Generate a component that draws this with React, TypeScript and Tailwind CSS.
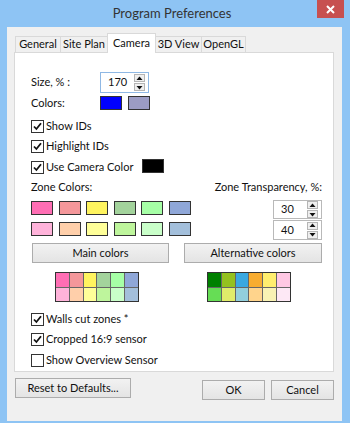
const zone1 = ["#ff6eb4", "#f4979a", "#fff45f", "#a3d39c", "#a6ffa6", "#8fa7d8"];
const zone2 = ["#ffb3da", "#ffcfaa", "#ffff99", "#bef59c", "#c9ffc9", "#a3bfdb"];
const alt1 = ["#008000", "#94c11f", "#3aa8e0", "#f7ac30", "#ffee6e", "#ffc8e3"];
const alt2 = ["#66dd55", "#e0ec6a", "#92cfdc", "#ffd48c", "#f8f2b4", "#fde8f5"];

function Spinner() {
  return (
    <div className="flex flex-col gap-[1px] mr-[3px]">
      <div className="w-[11px] h-[8px] border border-[#b5b5b5] bg-[#efefef] flex items-center justify-center">
        <svg width="7" height="5" viewBox="0 0 7 5">
          <path d="M3.5 0.5 L6.5 4 L0.5 4 Z" fill="#111" />
        </svg>
      </div>
      <div className="w-[11px] h-[8px] border border-[#b5b5b5] bg-[#efefef] flex items-center justify-center">
        <svg width="7" height="5" viewBox="0 0 7 5">
          <path d="M0.5 1 L6.5 1 L3.5 4.5 Z" fill="#111" />
        </svg>
      </div>
    </div>
  );
}

function SpinBox({ value, focus, h }: { value: string; focus?: boolean; h: string }) {
  return (
    <div
      className={`w-[49px] ${h} bg-white border flex items-center justify-between ${
        focus ? "border-[#8fb8e4]" : "border-[#b9b9b9]"
      }`}
    >
      <span className="pl-[7px] text-[11px] text-[#111]">{value}</span>
      <Spinner />
    </div>
  );
}

function Check({ label, checked, h, w = "" }: { label: string; checked: boolean; h: string; w?: string }) {
  return (
    <div className={`flex items-center gap-[2px] whitespace-nowrap ${h} ${w}`}>
      <div className="w-[13px] h-[13px] border border-[#333] bg-white flex items-center justify-center">
        {checked && (
          <svg width="9" height="9" viewBox="0 0 9 9">
            <path d="M1 4.5 L3.4 7 L8 1.2" stroke="#111" strokeWidth="1.8" fill="none" />
          </svg>
        )}
      </div>
      <span className="text-[11px] text-[#111]">{label}</span>
    </div>
  );
}

function Swatch({ color }: { color: string }) {
  return <div className="w-[22px] h-[14px] border border-[#333]" style={{ background: color }} />;
}

function Palette({ top, bottom }: { top: string[]; bottom: string[] }) {
  return (
    <div className="grid grid-cols-6 w-[84px] h-[30px] border border-[#333] bg-[#666] gap-px">
      {[...top, ...bottom].map((c, i) => (
        <div key={i} style={{ background: c }} />
      ))}
    </div>
  );
}

function Btn({ label, w }: { label: string; w: string }) {
  return (
    <div
      className={`${w} h-[20px] border border-[#acacac] bg-gradient-to-b from-[#f2f2f2] to-[#e4e4e4] flex items-center justify-center whitespace-nowrap text-[11px] text-[#111]`}
    >
      {label}
    </div>
  );
}

function Tab({ label, w, active }: { label: string; w: string; active?: boolean }) {
  if (active)
    return (
      <div
        className={`${w} h-[20px] -mb-px -ml-px relative z-10 bg-white border-t border-l border-r border-[#d9d9d9] flex items-center justify-center whitespace-nowrap text-[11px] text-[#111]`}
      >
        {label}
      </div>
    );
  return (
    <div
      className={`${w} h-[16px] -ml-px bg-[#f0f0f0] border-t border-l border-r border-[#d9d9d9] flex items-center justify-center whitespace-nowrap text-[11px] text-[#111]`}
    >
      {label}
    </div>
  );
}

export default function App() {
  return (
    <div
      className="w-[350px] h-[423px] bg-[#8ec4f4] flex flex-col"
      style={{ fontFamily: 'Lato, "Noto Sans", sans-serif' }}
    >
      <div className="h-[27px] flex items-start">
        <div className="flex-1 h-[27px] flex items-center justify-center pl-[27px] whitespace-nowrap text-[13px] text-[#333]">
          Program Preferences
        </div>
        <div className="w-[27px] h-[18px] mr-[6px] bg-[#c75050] flex items-center justify-center">
          <svg width="9" height="9" viewBox="0 0 9 9">
            <path d="M1 1 L8 8 M8 1 L1 8" stroke="#fff" strokeWidth="2" />
          </svg>
        </div>
      </div>

      <div className="ml-[7px] mr-[8px] mb-[2px] flex-1 bg-[#f0f0f0] flex flex-col pl-[7px] pr-[8px] pt-[6px]">
        <div className="flex items-end h-[19px] pl-[2px]">
          <Tab label="General" w="w-[46px]" />
          <Tab label="Site Plan" w="w-[48px]" />
          <Tab label="Camera" w="w-[49px]" active />
          <Tab label="3D View" w="w-[47px]" />
          <Tab label="OpenGL" w="w-[45px]" />
        </div>

        <div className="h-[320px] bg-white border border-[#d9d9d9] pl-[16px] pr-[11px] pt-[19px] flex flex-col text-[11px] text-[#111]">
          <div className="flex items-center h-[21px]">
            <span className="w-[69px]">Size, % :</span>
            <SpinBox value="170" focus h="h-[21px]" />
          </div>
          <div className="flex items-center h-[14px] mt-[3px]">
            <span className="w-[69px]">Colors:</span>
            <Swatch color="#0000ff" />
            <div className="w-[6px]" />
            <Swatch color="#9c9cc4" />
          </div>
          <div className="mt-[6px]">
            <Check label="Show IDs" checked h="h-[20px]" />
            <Check label="Highlight IDs" checked h="h-[21px]" />
            <div className="flex items-center h-[20px]">
              <Check label="Use Camera Color" checked h="h-[20px]" w="w-[111px]" />
              <div className="-mt-[3px]">
                <Swatch color="#000000" />
              </div>
            </div>
          </div>
          <div className="flex items-center justify-between h-[20px] whitespace-nowrap">
            <span>Zone Colors:</span>
            <span>Zone Transparency, %:</span>
          </div>
          <div className="flex justify-between mt-[3px]">
            <div className="flex flex-col gap-[7px] pt-[1px]">
              <div className="flex gap-[5.6px]">
                {zone1.map((c) => (
                  <Swatch key={c} color={c} />
                ))}
              </div>
              <div className="flex gap-[5.6px]">
                {zone2.map((c) => (
                  <Swatch key={c} color={c} />
                ))}
              </div>
            </div>
            <div className="flex flex-col gap-[1px]">
              <SpinBox value="30" h="h-[19px]" />
              <SpinBox value="40" h="h-[20px]" />
            </div>
          </div>
          <div className="flex justify-between mt-[3px] pl-[1px]">
            <Btn label="Main colors" w="w-[137px]" />
            <Btn label="Alternative colors" w="w-[138px]" />
          </div>
          <div className="flex mt-[9px]">
            <div className="ml-[24px]">
              <Palette top={zone1} bottom={zone2} />
            </div>
            <div className="ml-[68px]">
              <Palette top={alt1} bottom={alt2} />
            </div>
          </div>
          <div className="mt-[7px]">
            <Check label="Walls cut zones *" checked h="h-[20px]" />
            <Check label="Cropped 16:9 sensor" checked h="h-[21px]" />
            <Check label="Show Overview Sensor" checked={false} h="h-[21px]" />
          </div>
        </div>

        <div className="flex items-start mt-[6px] pl-[1px]">
          <Btn label="Reset to Defaults..." w="w-[116px]" />
          <div className="flex-1" />
          <div className="mt-[2px] flex gap-[6px]">
            <Btn label="OK" w="w-[63px]" />
            <Btn label="Cancel" w="w-[63px]" />
          </div>
        </div>
      </div>
    </div>
  );
}
